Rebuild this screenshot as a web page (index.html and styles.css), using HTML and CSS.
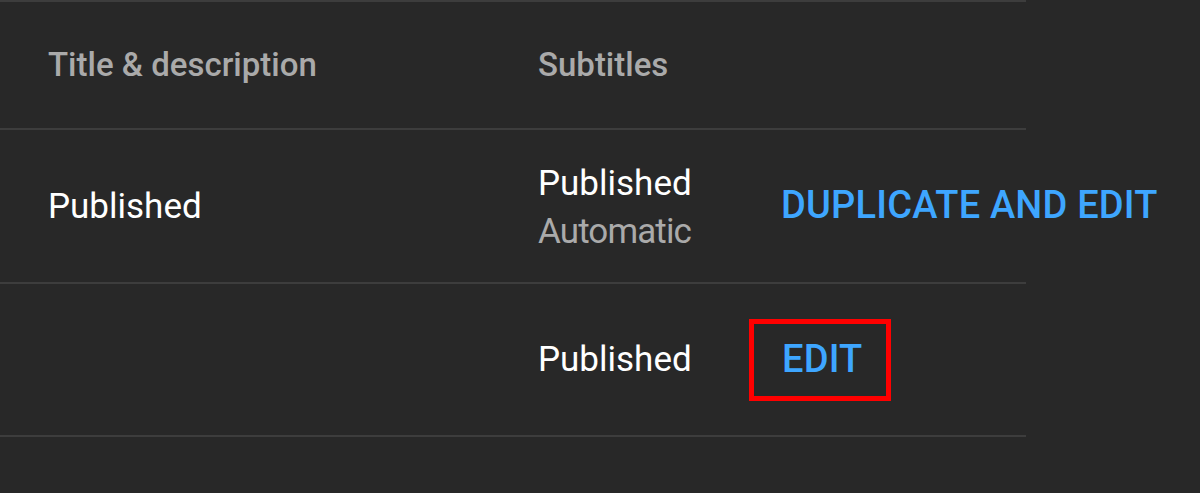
FILE: index.html
```html
<!DOCTYPE html>
<html>
<head>
<meta charset="utf-8">
<link rel="stylesheet" href="styles.css">
</head>
<body>
<div class="table">
  <div class="row head">
    <div class="cell c1">Title &amp; description</div>
    <div class="cell c2">Subtitles</div>
    <div class="cell c3"></div>
  </div>
  <div class="row r2">
    <div class="cell c1">Published</div>
    <div class="cell c2"><div>Published</div><div class="sub">Automatic</div></div>
    <div class="cell c3"><span class="btn">DUPLICATE AND EDIT</span></div>
  </div>
  <div class="row r3">
    <div class="cell c1"></div>
    <div class="cell c2">Published</div>
    <div class="cell c3"><span class="btn boxed">EDIT</span></div>
  </div>
</div>
</body>
</html>
```
FILE: styles.css
```css
html, body {
  margin: 0;
  background: #282828;
  height: 100%;
}
body {
  font-family: Roboto, "Liberation Sans", sans-serif;
  color: #ffffff;
  font-size: 35px;
}
.table {
  width: 1026px;
  border-top: 2px solid #3d3d3d;
}
.row {
  display: grid;
  grid-template-columns: 490px 243px auto;
  padding-left: 48px;
  align-items: center;
  border-bottom: 2px solid #3d3d3d;
  white-space: nowrap;
}
.head {
  height: 126px;
  color: #aaaaaa;
  font-weight: 500;
  font-size: 33px;
}
.r2 { height: 152px; }
.r3 { height: 151px; }
.cell { line-height: 48px; }
.r2 .c1 { padding-top: 2px; }
.r2 .c2 { padding-top: 4px; }
.sub { color: #aaaaaa; letter-spacing: -0.9px; }
.btn {
  color: #3ea6ff;
  font-weight: 500;
  font-size: 38px;
  letter-spacing: 0.2px;
  display: inline-block;
}
.boxed {
  margin-left: -32px;
  padding: 13px 24px 14px 28px;
  border: 5px solid #ff0000;
  line-height: 45px;
}
```
